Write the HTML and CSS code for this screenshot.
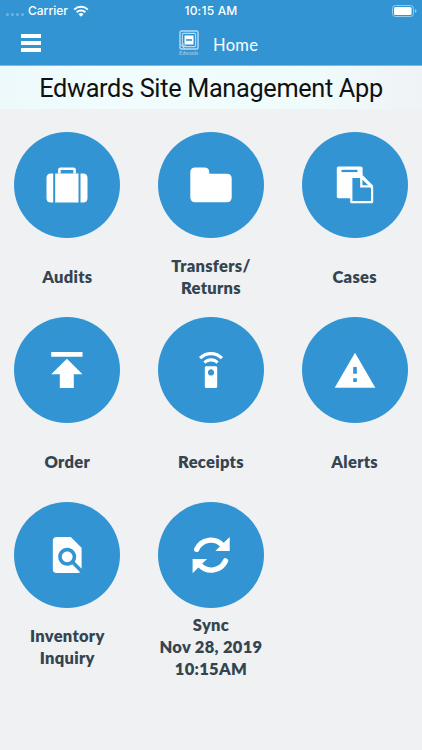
FILE: index.html
```html
<!DOCTYPE html>
<html lang="en">
<head>
    <meta charset="utf-8">
    <title>Home</title>
    <link rel="stylesheet" href="styles.css">
</head>
<body>
    <div class="status">
        <div class="carrier">
            <span class="dots"><i></i><i></i><i></i><i></i></span>
            <span class="carrier-name">Carrier</span>
            <svg class="wifi" width="16" height="12" viewBox="0 0 16 12">
                <path d="M1.2 4.6a9.8 9.8 0 0 1 13.6 0M3.7 7.2a6.2 6.2 0 0 1 8.6 0" fill="none" stroke="#fff" stroke-width="2"/>
                <path d="M5.5 9.2a3.6 3.6 0 0 1 5 0L8 11.7z" fill="#fff"/>
            </svg>
        </div>
        <div class="time">10:15 AM</div>
        <div class="power">
            <svg width="26" height="12" viewBox="0 0 26 12">
                <rect x="0.5" y="0.5" width="21" height="11" rx="3" fill="none" stroke="#9bcbea"/>
                <rect x="2" y="2" width="17.6" height="8" rx="1.5" fill="#fff"/>
                <path d="M23 4v4q1.5-.6 1.5-2T23 4z" fill="#9bcbea"/>
            </svg>
        </div>
    </div>
    <div class="navbar">
        <button class="menu" aria-label="Menu"><i></i><i></i><i></i></button>
        <div class="brand">
            <div class="logo">
                <svg width="20" height="20" viewBox="0 0 20 20" fill="none" stroke="#b5daf1">
                    <rect x="1" y="1" width="18" height="18" rx="1.5" stroke-width="1.4"/>
                    <rect x="3.4" y="3.4" width="13.2" height="13.2" rx="1" stroke-width="1.1"/>
                    <rect x="5.5" y="5.5" width="9" height="9" fill="#fff" stroke="none"/>
                    <path d="M7 10h6" stroke="#3294d3" stroke-width="1.6"/>
                    <path d="M1 14l5 5M4 13v3h3"/>
                </svg>
                <span class="logo-text">Edwards</span>
            </div>
            <span class="title">Home</span>
        </div>
    </div>
    <div class="banner">Edwards Site Management App</div>

    <div class="grid">
        <div class="tile">
            <div class="circle">
                <svg class="icon" viewBox="0 0 44 44">
                    <path d="M14.4 10.5V6.7q0-1 1-1h13.2q1 0 1 1v3.8" fill="none" stroke="#fff" stroke-width="2.6"/>
                    <path d="M8.2 10.5v29H6q-4.5 0-4.5-4.5V15q0-4.5 4.5-4.5zM10.2 10.5h23.3v29H10.2zM35.5 10.5H38q4.5 0 4.5 4.5v20q0 4.5-4.5 4.5h-2.5z"/>
                </svg>
            </div>
            <div class="label">Audits</div>
        </div>
        <div class="tile">
            <div class="circle">
                <svg class="icon" viewBox="0 0 44 44">
                    <path d="M6.3 4.5h9q5 0 5 5v1.3h17.4q5 0 5 5v18.4q0 5-5 5H6.3q-5 0-5-5V9.5q0-5 5-5z"/>
                </svg>
            </div>
            <div class="label">Transfers/<br>Returns</div>
        </div>
        <div class="tile">
            <div class="circle">
                <svg class="icon" viewBox="0 0 44 44">
                    <rect x="3.8" y="3.5" width="25.8" height="31.7" rx="1.6"/>
                    <path class="cut" d="M8.5 6.8h16v2.3h-16z"/>
                    <path class="cut" d="M18.3 13.9h9.9l10.9 10.5v14.7H18.3z" stroke="#fff" stroke-width="2.2" stroke-linejoin="round"/>
                    <path d="M28.3 11v12.3h11.5" fill="none" stroke="#fff" stroke-width="2.3"/>
                    <path d="M29.2 13.4l9.9 10" fill="none" stroke="#fff" stroke-width="2.3"/>
                </svg>
            </div>
            <div class="label">Cases</div>
        </div>
        <div class="tile">
            <div class="circle">
                <svg class="icon" viewBox="0 0 44 44">
                    <path d="M6.2 4h31.3v4.7H6.2zM21.9 10.7l15.6 15.6h-8.7V40h-14V26.3H6.2z"/>
                </svg>
            </div>
            <div class="label">Order</div>
        </div>
        <div class="tile">
            <div class="circle">
                <svg class="icon" viewBox="0 0 44 44">
                    <path transform="translate(3.4 4) scale(1.55 1.57)" d="M15 9H9c-.55 0-1 .45-1 1v12c0 .55.45 1 1 1h6c.55 0 1-.45 1-1V10c0-.55-.45-1-1-1zm-3 6c-1.1 0-2-.9-2-2s.9-2 2-2 2 .9 2 2-.9 2-2 2zM7.05 6.05l1.41 1.41C9.37 6.56 10.62 6 12 6s2.63.56 3.54 1.46l1.41-1.41C15.68 4.78 13.93 4 12 4s-3.68.78-4.95 2.05zM12 0C8.96 0 6.21 1.23 4.22 3.22l1.41 1.41C7.26 3.01 9.51 2 12 2s4.74 1.01 6.36 2.64l1.41-1.41C17.79 1.23 15.04 0 12 0z"/>
                </svg>
            </div>
            <div class="label">Receipts</div>
        </div>
        <div class="tile">
            <div class="circle">
                <svg class="icon" viewBox="0 0 44 44">
                    <path d="M22 4.7l20.3 35H1.7z"/>
                    <path class="cut" d="M20.2 19h3.6v6.8h-3.6zM20.2 30.3h3.6V34h-3.6z"/>
                </svg>
            </div>
            <div class="label">Alerts</div>
        </div>
        <div class="tile">
            <div class="circle">
                <svg class="icon" viewBox="0 0 44 44">
                    <path transform="translate(.6 .4) scale(1.8)" d="M20 19.59V8l-6-6H6c-1.1 0-1.99.9-1.99 2L4 20c0 1.1.89 2 1.99 2H18c.45 0 .85-.15 1.19-.4l-4.43-4.43c-.8.52-1.74.83-2.76.83-2.76 0-5-2.24-5-5s2.24-5 5-5 5 2.24 5 5c0 1.02-.31 1.96-.83 2.75L20 19.59zM9 13c0 1.66 1.34 3 3 3s3-1.34 3-3-1.34-3-3-3-3 1.34-3 3z"/>
                </svg>
            </div>
            <div class="label">Inventory<br>Inquiry</div>
        </div>
        <div class="tile">
            <div class="circle">
                <svg class="icon" viewBox="0 0 44 44">
                    <path d="M7.7 16.3A15.6 15.6 0 0 1 33.5 12.3M36.5 27.9A15.6 15.6 0 0 1 10.7 31.9" fill="none" stroke="#fff" stroke-width="5.4" stroke-linecap="round"/>
                    <path d="M40.7 4v14H26.3zM3.6 40.3V26H18z"/>
                </svg>
            </div>
            <div class="label">Sync<br>Nov 28, 2019<br>10:15AM</div>
        </div>
    </div>
</body>
</html>
```
FILE: styles.css
```css
* {
    box-sizing: border-box;
}
body {
    margin: 0;
    height: 750px;
    overflow: hidden;
    background: #eff1f3;
    font-family: Lato, "Liberation Sans", sans-serif;
}
.status {
    display: grid;
    grid-template-columns: 1fr auto 1fr;
    align-items: center;
    height: 21px;
    padding: 0 4px 0 6px;
    background: #3294d3;
    color: #fff;
    font-family: Inter, "Liberation Sans", sans-serif;
    font-size: 12px;
}
.carrier {
    display: flex;
    align-items: center;
}
.dots {
    display: flex;
    gap: 2px;
    width: 22px;
    padding-top: 7px;
}
.dots i {
    width: 3px;
    height: 3px;
    border-radius: 50%;
    background: #6fb4e0;
}
.carrier-name {
    width: 45px;
    font-weight: 500;
}
.time {
    margin-right: 2px;
    font-weight: 500;
    letter-spacing: 0.2px;
}
.power {
    display: flex;
    justify-content: flex-end;
}
.navbar {
    display: flex;
    align-items: center;
    height: 45px;
    padding-left: 21px;
    border-bottom: 1px solid #7dbae3;
    background: #3294d3;
}
.menu {
    display: flex;
    flex-direction: column;
    gap: 3px;
    width: 20px;
    padding: 0;
    border: 0;
    background: none;
}
.menu i {
    height: 4px;
    background: #fff;
}
.brand {
    display: flex;
    align-items: center;
    margin-left: 137px;
    color: #fff;
}
.logo {
    display: flex;
    flex-direction: column;
    align-items: center;
    width: 21px;
    color: #b5daf1;
}
.logo-text {
    font-family: "Liberation Serif", serif;
    font-size: 5.5px;
    line-height: 6px;
}
.title {
    margin: 3px 0 0 14px;
    font-size: 16.5px;
    letter-spacing: 0.3px;
}
.banner {
    height: 43px;
    background: linear-gradient(to right, #eef9fb, #f0fcfd 25%, #f0fbfc 75%, #eff3f5);
    color: #111;
    font-family: Roboto, sans-serif;
    font-size: 25.3px;
    letter-spacing: -0.33px;
    line-height: 45px;
    text-align: center;
    white-space: nowrap;
}
.grid {
    display: grid;
    grid-template-columns: repeat(3, 106px);
    column-gap: 37.7px;
    row-gap: 6.9px;
    padding: 22.5px 0 0 14.3px;
}
.circle {
    display: flex;
    align-items: center;
    justify-content: center;
    width: 106px;
    height: 106px;
    border-radius: 50%;
    background: #3294d3;
}
.icon {
    width: 44px;
    height: 44px;
    fill: #fff;
}
.cut {
    fill: #3294d3;
}
.label {
    display: flex;
    align-items: center;
    justify-content: center;
    height: 66px;
    margin-top: 6.4px;
    color: #344450;
    font-size: 16.5px;
    font-weight: 800;
    letter-spacing: 0.3px;
    line-height: 22px;
    text-align: center;
    white-space: nowrap;
}
```
